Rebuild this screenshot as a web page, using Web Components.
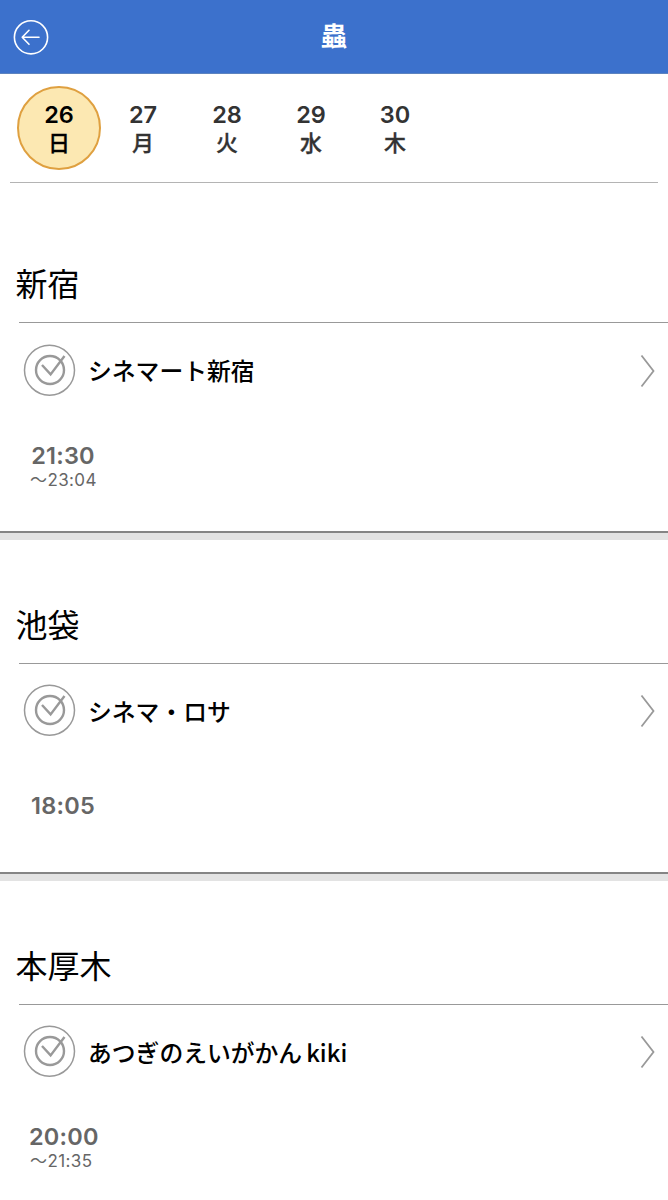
<!DOCTYPE html>
<html lang="ja">
<head>
<meta charset="utf-8">
<meta name="viewport" content="width=device-width">
<title>蟲</title>
<style>
  body {
    margin: 0;
    height: 1200px;
    overflow: hidden;
    background: #fff;
    color: #000;
    font-family: Inter, "Noto Sans CJK JP", sans-serif;
  }
  main {
    padding-top: 16.3px;
  }
</style>
</head>
<body>
<app-header>蟲</app-header>
<date-bar>
  <date-item selected day="日">26</date-item>
  <date-item day="月">27</date-item>
  <date-item day="火">28</date-item>
  <date-item day="水">29</date-item>
  <date-item day="木">30</date-item>
</date-bar>
<main>
  <area-section>
    <span slot="area">新宿</span>
    <theater-row>シネマート新宿</theater-row>
    <show-time slot="times" until="23:04">21:30</show-time>
  </area-section>
  <area-section>
    <span slot="area">池袋</span>
    <theater-row>シネマ・ロサ</theater-row>
    <show-time slot="times">18:05</show-time>
  </area-section>
  <area-section>
    <span slot="area">本厚木</span>
    <theater-row>あつぎのえいがかん<span style="margin-left: 4px">kiki</span></theater-row>
    <show-time slot="times" until="21:35">20:00</show-time>
  </area-section>
</main>

<script>
'use strict'

class AppHeader extends HTMLElement {
  constructor () {
    super()
    this.attachShadow({ mode: 'open' }).innerHTML = `
    <style>
      :host {
        display: grid;
        grid-template-columns: 1fr auto 1fr;
        align-items: center;
        box-sizing: border-box;
        height: 74px;
        padding: 0 13px;
        background: #3c71cc;
        border-bottom: 1px solid #5d83bf;
        color: #fff;
      }
      svg {
        display: block;
      }
      h1 {
        margin: 0;
        padding-bottom: 3px;
        font: 700 26px/36px "Noto Sans CJK JP", sans-serif;
      }
    </style>
    <svg width="36" height="36" viewBox="0 0 36 36" fill="none" stroke="#fff" stroke-width="1.6" stroke-linecap="round" stroke-linejoin="round">
      <circle cx="18" cy="18.3" r="16.6"/>
      <path d="M26 18.3H9.2M16 11.3L9.2 18.3L16 25.3"/>
    </svg>
    <h1><slot></slot></h1>
    `
  }
}

class DateBar extends HTMLElement {
  constructor () {
    super()
    this.attachShadow({ mode: 'open' }).innerHTML = `
    <style>
      :host {
        display: flex;
        box-sizing: border-box;
        height: 109px;
        margin: 0 10px;
        padding: 12px 7px 0;
        border-bottom: 1px solid #b4b4b4;
      }
    </style>
    <slot></slot>
    `
  }
}

class DateItem extends HTMLElement {
  constructor () {
    super()
    this.attachShadow({ mode: 'open' }).innerHTML = `
    <style>
      :host {
        display: flex;
        flex-direction: column;
        align-items: center;
        box-sizing: border-box;
        width: 84px;
        height: 84px;
        padding-top: 14px;
        border: 2px solid transparent;
        border-radius: 50%;
        color: #333;
        font-size: 23.5px;
        font-weight: 600;
        line-height: 25px;
      }
      :host([selected]) {
        background: #fce8b2;
        border-color: #dfa040;
        color: #000;
      }
      .day {
        font: 500 22px/28px "Noto Sans CJK JP", sans-serif;
        -webkit-text-stroke: 0.3px;
      }
    </style>
    <span><slot></slot></span>
    <span class="day"></span>
    `
  }

  connectedCallback () {
    this.shadowRoot.querySelector('.day').textContent = this.getAttribute('day')
  }
}

class AreaSection extends HTMLElement {
  constructor () {
    super()
    this.attachShadow({ mode: 'open' }).innerHTML = `
    <style>
      :host {
        display: flex;
        flex-direction: column;
        box-sizing: border-box;
        height: 340.7px;
        border-bottom: 7px solid #e3e3e3;
      }
      h2 {
        margin: 0 0 0 19px;
        padding-top: 59px;
        height: 64px;
        border-bottom: 1px solid #999;
        font: 400 32px/48px "Noto Sans CJK JP", sans-serif;
      }
      h2 slot {
        display: block;
        margin-left: -3.5px;
      }
      .times {
        flex: 1;
        display: flex;
        align-items: center;
        padding: 0 29px 17px;
        border-bottom: 2px solid #858585;
      }
    </style>
    <h2><slot name="area"></slot></h2>
    <slot></slot>
    <div class="times"><slot name="times"></slot></div>
    `
  }
}

class TheaterRow extends HTMLElement {
  constructor () {
    super()
    this.attachShadow({ mode: 'open' }).innerHTML = `
    <style>
      :host {
        display: flex;
        align-items: center;
        height: 94px;
        padding: 0 12px 0 23px;
        font: 500 23.8px/36px "Noto Sans CJK JP", sans-serif;
      }
      .name {
        flex: 1;
        margin-left: 12px;
      }
      svg {
        display: block;
        fill: none;
        stroke: #999;
      }
      .arrow {
        margin-top: 1px;
      }
    </style>
    <svg width="53" height="53" viewBox="0 0 53 53">
      <circle cx="26.5" cy="26.2" r="25" stroke-width="1.5"/>
      <circle cx="27" cy="26" r="14" stroke-width="2.4"/>
      <path d="M19 21L27.6 30.4L41.5 12" stroke-width="2.4"/>
    </svg>
    <span class="name"><slot></slot></span>
    <svg class="arrow" width="16" height="34" viewBox="0 0 16 34">
      <path d="M1.5 1.5L13.5 17L1.5 32.5" stroke-width="1.8"/>
    </svg>
    `
  }
}

class ShowTime extends HTMLElement {
  constructor () {
    super()
    this.attachShadow({ mode: 'open' }).innerHTML = `
    <style>
      :host {
        display: block;
        width: 68px;
        color: #666;
      }
      .start {
        font-size: 23.5px;
        font-weight: 600;
        line-height: 28px;
        letter-spacing: 0.2px;
        text-align: center;
        white-space: nowrap;
      }
      .end {
        padding-left: 1px;
        font-size: 17px;
        line-height: 20px;
        letter-spacing: 0.4px;
        white-space: nowrap;
      }
      .end:empty {
        display: none;
      }
    </style>
    <div class="start"><slot></slot></div>
    <div class="end"></div>
    `
  }

  connectedCallback () {
    const until = this.getAttribute('until')
    if (until) {
      this.shadowRoot.querySelector('.end').textContent = '～' + until
    }
  }
}

customElements.define('app-header', AppHeader)
customElements.define('date-bar', DateBar)
customElements.define('date-item', DateItem)
customElements.define('area-section', AreaSection)
customElements.define('theater-row', TheaterRow)
customElements.define('show-time', ShowTime)
</script>
</body>
</html>
